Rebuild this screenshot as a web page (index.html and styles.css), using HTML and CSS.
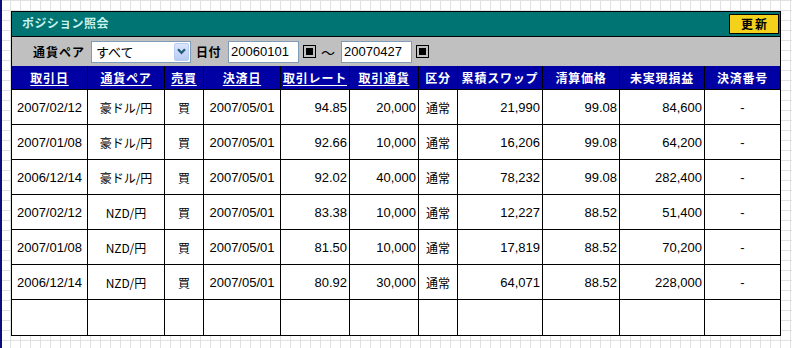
FILE: index.html
```html
<!DOCTYPE html>
<html lang="ja">
<head>
<meta charset="utf-8">
<title>ポジション照会</title>
<link rel="stylesheet" href="styles.css">
</head>
<body>
<div class="panel">
  <div class="titlebar">
    <span class="title">ポジション照会</span>
    <button class="refresh" type="button">更新</button>
  </div>
  <div class="filters">
    <span class="flabel">通貨ペア</span>
    <div class="select">
      <span class="sel-text">すべて</span>
      <span class="drop"><svg width="9" height="7" viewBox="0 0 9 7"><path d="M1 1.2 L4.5 4.8 L8 1.2" stroke="#1f5d78" stroke-width="2.2" fill="none"/></svg></span>
    </div>
    <span class="flabel date-label">日付</span>
    <div class="input">20060101</div>
    <span class="cal"></span>
    <span class="tilde">～</span>
    <div class="input">20070427</div>
    <span class="cal"></span>
  </div>
  <div class="row head">
    <div class="cell"><u>取引日</u></div>
    <div class="cell"><u>通貨ペア</u></div>
    <div class="cell"><u>売買</u></div>
    <div class="cell"><u>決済日</u></div>
    <div class="cell"><u>取引レート</u></div>
    <div class="cell"><u>取引通貨</u></div>
    <div class="cell">区分</div>
    <div class="cell">累積スワップ</div>
    <div class="cell">清算価格</div>
    <div class="cell">未実現損益</div>
    <div class="cell">決済番号</div>
  </div>
  <div class="row data">
    <div class="cell">2007/02/12</div><div class="cell jp">豪ドル/円</div><div class="cell jp">買</div><div class="cell">2007/05/01</div><div class="cell num">94.85</div><div class="cell num">20,000</div><div class="cell jp">通常</div><div class="cell num">21,990</div><div class="cell num">99.08</div><div class="cell num">84,600</div><div class="cell">-</div>
  </div>
  <div class="row data">
    <div class="cell">2007/01/08</div><div class="cell jp">豪ドル/円</div><div class="cell jp">買</div><div class="cell">2007/05/01</div><div class="cell num">92.66</div><div class="cell num">10,000</div><div class="cell jp">通常</div><div class="cell num">16,206</div><div class="cell num">99.08</div><div class="cell num">64,200</div><div class="cell">-</div>
  </div>
  <div class="row data">
    <div class="cell">2006/12/14</div><div class="cell jp">豪ドル/円</div><div class="cell jp">買</div><div class="cell">2007/05/01</div><div class="cell num">92.02</div><div class="cell num">40,000</div><div class="cell jp">通常</div><div class="cell num">78,232</div><div class="cell num">99.08</div><div class="cell num">282,400</div><div class="cell">-</div>
  </div>
  <div class="row data">
    <div class="cell">2007/02/12</div><div class="cell jp">NZD/円</div><div class="cell jp">買</div><div class="cell">2007/05/01</div><div class="cell num">83.38</div><div class="cell num">10,000</div><div class="cell jp">通常</div><div class="cell num">12,227</div><div class="cell num">88.52</div><div class="cell num">51,400</div><div class="cell">-</div>
  </div>
  <div class="row data">
    <div class="cell">2007/01/08</div><div class="cell jp">NZD/円</div><div class="cell jp">買</div><div class="cell">2007/05/01</div><div class="cell num">81.50</div><div class="cell num">10,000</div><div class="cell jp">通常</div><div class="cell num">17,819</div><div class="cell num">88.52</div><div class="cell num">70,200</div><div class="cell">-</div>
  </div>
  <div class="row data">
    <div class="cell">2006/12/14</div><div class="cell jp">NZD/円</div><div class="cell jp">買</div><div class="cell">2007/05/01</div><div class="cell num">80.92</div><div class="cell num">30,000</div><div class="cell jp">通常</div><div class="cell num">64,071</div><div class="cell num">88.52</div><div class="cell num">228,000</div><div class="cell">-</div>
  </div>
  <div class="row data">
    <div class="cell"></div><div class="cell"></div><div class="cell"></div><div class="cell"></div><div class="cell"></div><div class="cell"></div><div class="cell"></div><div class="cell"></div><div class="cell"></div><div class="cell"></div><div class="cell"></div>
  </div>
</div>
</body>
</html>
```

FILE: styles.css
```css
html {
  background-color: #ffffff;
  background-image:
    linear-gradient(to right, #e1e1e1 1px, transparent 1px),
    linear-gradient(to bottom, #e1e1e1 1px, transparent 1px);
  background-size: 10px 10px;
}

body {
  margin: 0;
  min-height: 348px;
  box-sizing: border-box;
  border-left: 2px solid #0c0c7c;
  padding: 11px 0 0 9px;
  font-family: "Liberation Sans", "Noto Sans CJK JP", sans-serif;
  color: #000;
}

.panel {
  width: 770px;
  box-sizing: border-box;
  border: 1px solid #000;
  background: #fff;
}

.titlebar {
  height: 25px;
  box-sizing: border-box;
  background: #007472;
  border-bottom: 1px solid #000;
  display: flex;
  justify-content: space-between;
  align-items: flex-start;
  padding: 0 1px 0 10px;
}

.title {
  color: #c6f2ee;
  font: bold 12px/22px "Noto Sans CJK JP", sans-serif;
  letter-spacing: 0.4px;
}

.refresh {
  margin-top: 2px;
  width: 50px;
  height: 20px;
  box-sizing: border-box;
  border: 1px solid #000;
  background: #f4d21c;
  color: #000;
  font: bold 12px/16px "Noto Sans CJK JP", sans-serif;
  letter-spacing: 2px;
  padding: 0 0 0 2px;
}

.filters {
  height: 29px;
  background: #c0c0c0;
  display: flex;
  align-items: center;
  padding-left: 21px;
}

.flabel {
  font: bold 12px "Noto Sans CJK JP", sans-serif;
  letter-spacing: 1px;
}

.select {
  margin-left: 6px;
  width: 100px;
  height: 22px;
  box-sizing: border-box;
  border: 1px solid #7f9db9;
  background: #fff;
  display: flex;
  align-items: center;
  justify-content: space-between;
  padding: 1px;
}

.sel-text {
  padding-left: 3px;
  font: 13px "Noto Sans CJK JP", sans-serif;
}

.drop {
  width: 15px;
  height: 18px;
  box-sizing: border-box;
  border: 1px solid #b9cbf0;
  border-radius: 2px;
  background: linear-gradient(#dce6fc, #b8cbf5);
  display: flex;
  align-items: center;
  justify-content: center;
}

.date-label {
  margin-left: 5px;
  letter-spacing: 0.5px;
}

.input {
  margin-left: 7px;
  width: 71px;
  height: 22px;
  box-sizing: border-box;
  border: 1px solid #7f9db9;
  background: #fff;
  font-size: 13px;
  line-height: 20px;
  padding-left: 2px;
}

.cal {
  margin-left: 4px;
  width: 13px;
  height: 13px;
  box-sizing: border-box;
  border: 1px solid #000;
  background: #c0c0c0;
  display: flex;
  align-items: center;
  justify-content: center;
}

.cal::after {
  content: "";
  width: 7px;
  height: 7px;
  background: #000;
}

.tilde {
  margin-left: 5px;
  font: 14px "Noto Sans CJK JP", sans-serif;
}

.tilde + .input {
  margin-left: 6px;
}

.row {
  display: grid;
  grid-template-columns: 76px 77px 39px 77px 69px 69px 39px 85px 77px 85px 75px;
}

.cell {
  box-sizing: border-box;
  border-right: 1px solid #000;
  border-bottom: 1px solid #000;
  display: flex;
  align-items: center;
  justify-content: center;
  font-size: 13px;
  white-space: nowrap;
}

.cell:last-child {
  border-right: 0;
}

.row:last-child .cell {
  border-bottom: 0;
}

.head .cell {
  height: 24px;
  background: #0000a4;
  color: #fff;
  font: bold 12px "Noto Sans CJK JP", sans-serif;
  letter-spacing: 0.8px;
}

.head u {
  text-underline-offset: 2px;
}

.data .cell {
  height: 35px;
}

.jp {
  font-family: "Noto Sans CJK JP", sans-serif;
  font-size: 12px;
}

.num {
  justify-content: flex-end;
  padding-right: 2px;
}
```
